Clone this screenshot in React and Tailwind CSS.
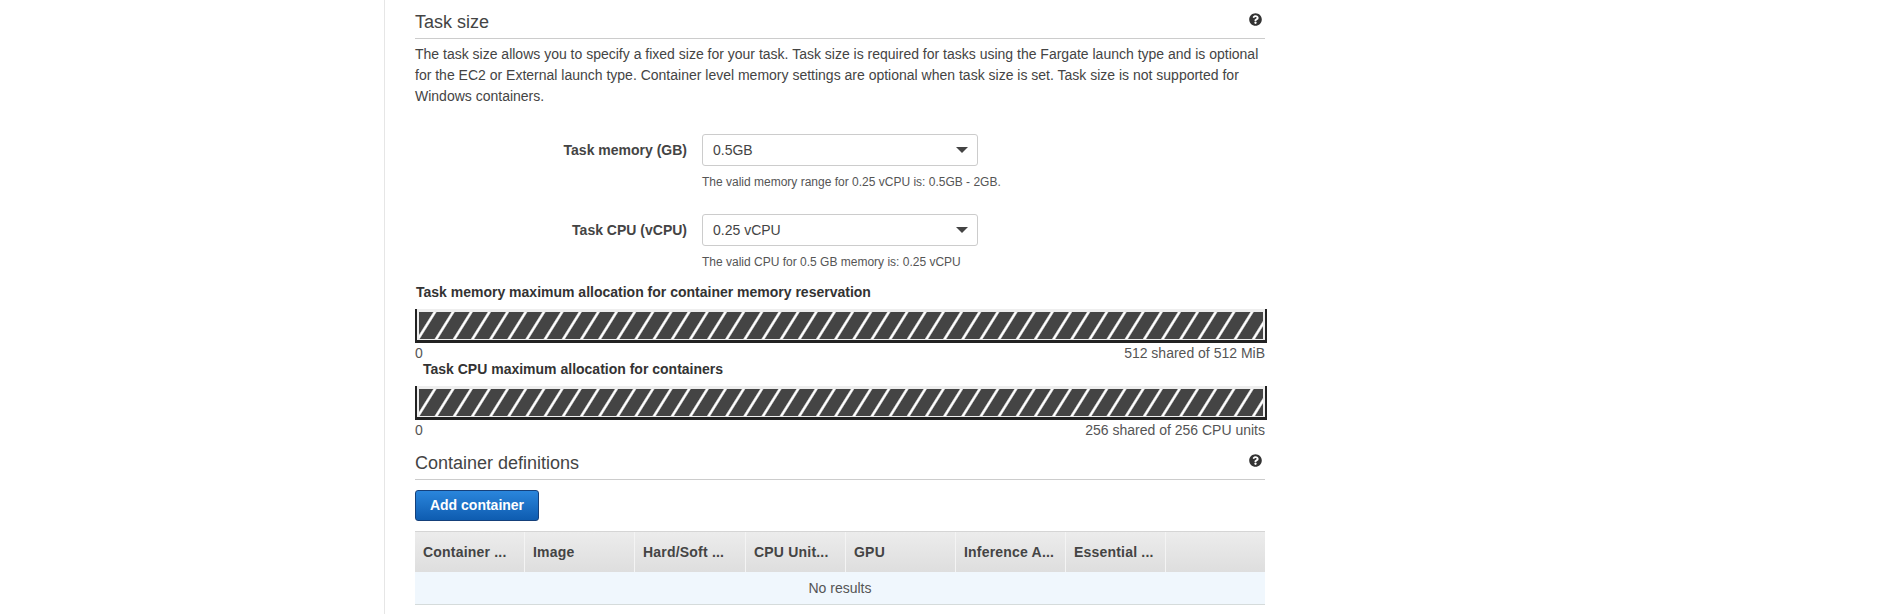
import React from "react";
import { FaQuestionCircle } from "react-icons/fa";

const columns = [
  { label: "Container ...", width: "w-[110px]" },
  { label: "Image", width: "w-[110px]" },
  { label: "Hard/Soft ...", width: "w-[111px]" },
  { label: "CPU Unit...", width: "w-[100px]" },
  { label: "GPU", width: "w-[110px]" },
  { label: "Inference A...", width: "w-[110px]" },
  { label: "Essential ...", width: "w-[100px]" },
  { label: "", width: "flex-1" },
];

const Heading = ({ title, className = "" }) => (
  <div className={`flex justify-between border-b border-[#ccc] ${className}`}>
    <h2 className="text-[18px] leading-[26px] text-[#444]">{title}</h2>
    <FaQuestionCircle className="mt-[4px] mr-[3px] text-[13px] text-[#333]" />
  </div>
);

const SelectRow = ({ label, value, hint, className = "" }) => (
  <div className={`flex ${className}`}>
    <label className="w-[287px] pr-[15px] pt-[6px] text-right text-[14px] leading-[20px] font-bold text-[#444]">
      {label}
    </label>
    <div>
      <div className="flex h-[32px] w-[276px] items-center justify-between rounded-[3px] border border-[#ccc] bg-white pl-[10px] pr-[9px] text-[14px] text-[#444]">
        <span>{value}</span>
        <span className="h-0 w-0 border-x-[6px] border-t-[6px] border-x-transparent border-t-[#444]" />
      </div>
      <p className="mt-[8px] text-[12px] leading-[16px] text-[#555]">{hint}</p>
    </div>
  </div>
);

const Allocation = ({ title, left, right, titleClass = "", className = "" }) => (
  <div className={className}>
    <div className={`text-[14px] leading-[20px] font-bold text-[#333] ${titleClass}`}>
      {title}
    </div>
    <div className="mt-[7px] h-[34px] w-[852px] border-x-2 border-b-[3px] border-x-[#222] border-b-[#222] bg-[#eee] pt-[3px] pb-[1px] px-[2px]">
      <div className="h-full w-full bg-[repeating-linear-gradient(122deg,#444_0px,#444_11.6px,#ccc_12.4px,#fff_13px,#fff_14px,#ccc_14.6px,#444_15.4px)]" />
    </div>
    <div className="flex w-[850px] justify-between pt-[1px] text-[14px] leading-[18px] text-[#555]">
      <span>{left}</span>
      <span>{right}</span>
    </div>
  </div>
);

export default function App() {
  return (
    <div className="h-[614px] overflow-hidden bg-white font-['Liberation_Sans',Arial,sans-serif]">
      <div className="ml-[384px] h-full border-l border-[#e6e6e6] pl-[30px]">
        <div className="w-[850px]">
          <Heading title="Task size" className="pt-[9px] pb-[3px]" />
          <p className="mt-[5px] text-[14px] leading-[21px] text-[#444]">
            The task size allows you to specify a fixed size for your task. Task size is required for tasks using the Fargate launch type and is optional for the EC2 or External launch type. Container level memory settings are optional when task size is set. Task size is not supported for Windows containers.
          </p>

          <SelectRow
            className="mt-[27px]"
            label="Task memory (GB)"
            value="0.5GB"
            hint="The valid memory range for 0.25 vCPU is: 0.5GB - 2GB."
          />
          <SelectRow
            className="mt-[24px]"
            label="Task CPU (vCPU)"
            value="0.25 vCPU"
            hint="The valid CPU for 0.5 GB memory is: 0.25 vCPU"
          />

          <Allocation
            className="mt-[12px]"
            title="Task memory maximum allocation for container memory reservation"
            left="0"
            right="512 shared of 512 MiB"
            titleClass="pl-[1px]"
          />
          <Allocation
            className="-mt-[3px]"
            title="Task CPU maximum allocation for containers"
            left="0"
            right="256 shared of 256 CPU units"
            titleClass="pl-[8px]"
          />

          <Heading title="Container definitions" className="mt-[11px] pb-[3px]" />

          <button className="mt-[10px] block h-[31px] w-[124px] rounded-[3px] border border-[#15407a] bg-gradient-to-b from-[#2a86dc] to-[#0e5cb0] text-[14px] font-bold text-white">
            Add container
          </button>

          <div className="mt-[10px] flex h-[41px] border-t border-[#d5d5d5] bg-gradient-to-b from-[#ececec] to-[#dedede]">
            {columns.map((c, i) => (
              <div
                key={i}
                className={`${c.width} border-r border-[#f4f4f4] pl-[8px] text-[14px] leading-[41px] font-bold tracking-[0.2px] text-[#444] last:border-r-0`}
              >
                {c.label}
              </div>
            ))}
          </div>
          <div className="flex h-[33px] items-center justify-center border-b border-[#d5dbdb] bg-[#f0f7fd] text-[14px] text-[#555]">
            No results
          </div>
        </div>
      </div>
    </div>
  );
}
